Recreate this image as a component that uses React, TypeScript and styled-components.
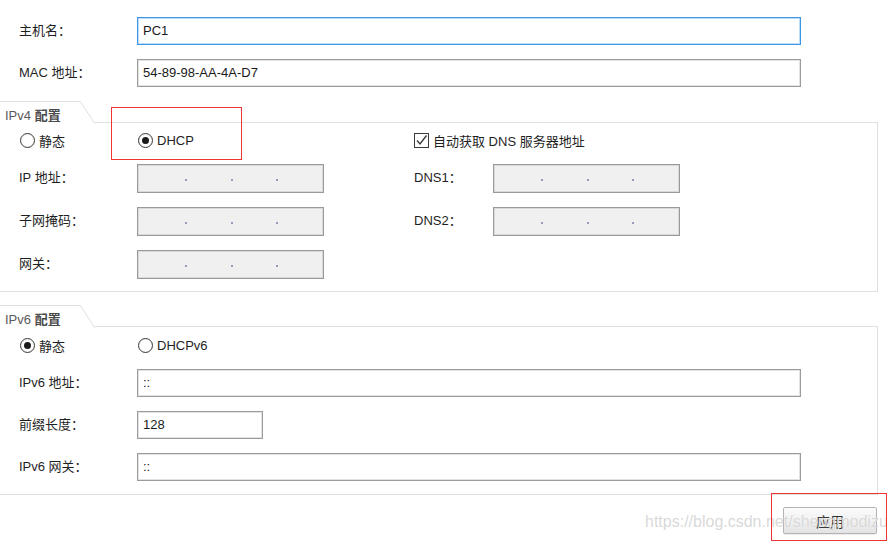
import React from 'react';
import styled, { createGlobalStyle } from 'styled-components';

const GlobalStyle = createGlobalStyle`
    html, body {
        margin: 0;
        padding: 0;
        background: #ffffff;
    }
    body {
        font-family: "Liberation Sans", "Noto Sans CJK SC", sans-serif;
        font-size: 13px;
        color: #1f1f1f;
    }
`;

const Page = styled.div`
    position: relative;
    width: 894px;
    height: 546px;
    overflow: hidden;
    padding-top: 17px;
    box-sizing: border-box;
    background: #ffffff;
`;

const TopForm = styled.div`
    display: grid;
    grid-template-columns: 118px 664px;
    row-gap: 14px;
    padding-left: 19px;
    align-items: center;
`;

const Label = styled.span`
    font-size: 13px;
    color: #1f1f1f;
    white-space: nowrap;
    padding-bottom: 4px;
`;

const TextField = styled.div<{ $focused?: boolean; $width?: number }>`
    height: 28px;
    width: ${p => (p.$width ? `${p.$width}px` : 'auto')};
    box-sizing: border-box;
    border: 1px solid ${p => (p.$focused ? '#3d96e6' : '#9c9c9c')};
    box-shadow: inset 0 0 0 1px ${p => (p.$focused ? '#bcdcf7' : '#e2e2e2')};
    background: #ffffff;
    display: flex;
    align-items: center;
    padding: 0 0 1px 5px;
    font-size: 13px;
    color: #1a1a1a;
`;

const Group = styled.div<{ $top: number }>`
    width: 878px;
    margin-top: ${p => p.$top}px;
`;

const GroupHeader = styled.div`
    display: flex;
    height: 22px;
`;

const Tab = styled.div`
    position: relative;
    width: 80px;
    height: 22px;
    box-sizing: border-box;
    border-top: 1px solid #e0e0e0;
    padding: 3px 0 0 5px;
    font-size: 13px;
    color: #5a5a5a;
    white-space: nowrap;

    b {
        color: #4a4a4a;
    }

    &::after {
        content: '';
        position: absolute;
        left: 80px;
        top: -1px;
        width: 15px;
        height: 23px;
        background: linear-gradient(
            to top right,
            transparent calc(50% - 0.8px),
            #dedede 50%,
            transparent calc(50% + 0.8px)
        );
    }
`;

const TabGap = styled.div`
    width: 15px;
`;

const HeaderLine = styled.div`
    flex: 1;
    border-bottom: 1px solid #e0e0e0;
`;

const GroupBody = styled.div<{ $pt: number; $pb: number }>`
    border-right: 1px solid #e0e0e0;
    border-bottom: 1px solid #e0e0e0;
    padding: ${p => p.$pt}px 0 ${p => p.$pb}px 19px;
`;

const Ipv4Grid = styled.div`
    display: grid;
    grid-template-columns: 118px 187px 90px 79px 187px;
    grid-template-rows: 20px 29px 29px 29px;
    row-gap: 14px;
    align-items: center;
`;

const Ipv6Grid = styled.div`
    display: grid;
    grid-template-columns: 118px 664px;
    grid-template-rows: 20px 28px 28px 28px;
    row-gap: 14px;
    align-items: center;
`;

const Choice = styled.label<{ $span?: number }>`
    display: flex;
    align-items: center;
    gap: 4px;
    font-size: 13px;
    color: #1f1f1f;
    white-space: nowrap;
    grid-column: ${p => (p.$span ? `span ${p.$span}` : 'auto')};
`;

const RadioMark = styled.span<{ $checked?: boolean }>`
    position: relative;
    width: 15px;
    height: 15px;
    box-sizing: border-box;
    border-radius: 50%;
    border: 1px solid #3a3a3a;
    background: #ffffff;
    box-shadow: inset 0 0 0 1px #f2f2f2;
    margin-left: 1px;

    &::after {
        content: '';
        display: ${p => (p.$checked ? 'block' : 'none')};
        position: absolute;
        left: 3px;
        top: 3px;
        width: 7px;
        height: 7px;
        border-radius: 50%;
        background: #1a1a1a;
    }
`;

const CheckMark = styled.span`
    width: 15px;
    height: 15px;
    box-sizing: border-box;
    border: 1px solid #3a3a3a;
    background: #ffffff;
    display: flex;
    align-items: center;
    justify-content: center;
`;

const Spacer = styled.span``;

const IpField = styled.div`
    height: 29px;
    width: 187px;
    box-sizing: border-box;
    border: 1px solid #9a9a9a;
    box-shadow: inset 0 0 0 1px #d9d9d9;
    background: #f0f0f0;
    display: flex;
    align-items: center;
    padding: 0 2px 0 4px;
`;

const IpSegment = styled.span`
    flex: 1;
`;

const IpDot = styled.span`
    width: 2px;
    height: 2px;
    margin-top: 3px;
    border-radius: 1px;
    background: #7a7fa8;
`;

const Footer = styled.div`
    width: 877px;
    display: flex;
    justify-content: flex-end;
    margin-top: 12px;
`;

const ApplyButton = styled.button`
    width: 94px;
    height: 27px;
    border: 1px solid #b4b4b4;
    border-radius: 2px;
    background: linear-gradient(to bottom, #fbfbfb 0%, #f1f1f1 50%, #e3e3e3 100%);
    box-shadow: 0 1px 1px rgba(0, 0, 0, 0.08);
    font-family: "Noto Sans CJK SC", sans-serif;
    font-size: 14px;
    color: #333333;
    padding: 0;
`;

const Annotation = styled.div<{ $x: number; $y: number; $w: number; $h: number }>`
    position: absolute;
    z-index: 10;
    left: ${p => p.$x}px;
    top: ${p => p.$y}px;
    width: ${p => p.$w}px;
    height: ${p => p.$h}px;
    box-sizing: border-box;
    border: 1px solid #f03434;
    pointer-events: none;
`;

const Watermark = styled.div`
    position: absolute;
    z-index: 5;
    left: 645px;
    top: 513px;
    font-family: "Liberation Sans", sans-serif;
    font-size: 16px;
    color: rgba(200, 200, 200, 0.7);
    text-shadow: 0 0 1px rgba(255, 255, 255, 0.9);
    white-space: nowrap;
    pointer-events: none;
`;

function Radio({ checked, children }: { checked?: boolean; children: React.ReactNode }) {
    return (
        <Choice>
            <RadioMark $checked={checked} />
            {children}
        </Choice>
    );
}

function Ip() {
    return (
        <IpField>
            <IpSegment />
            <IpDot />
            <IpSegment />
            <IpDot />
            <IpSegment />
            <IpDot />
            <IpSegment />
        </IpField>
    );
}

function GroupTitle({ version }: { version: string }) {
    return (
        <GroupHeader>
            <Tab>
                {version} <b>配置</b>
            </Tab>
            <TabGap />
            <HeaderLine />
        </GroupHeader>
    );
}

function App() {
    return (
        <Page>
            <GlobalStyle />
            <TopForm>
                <Label>主机名：</Label>
                <TextField $focused>PC1</TextField>
                <Label>MAC 地址：</Label>
                <TextField>54-89-98-AA-4A-D7</TextField>
            </TopForm>

            <Group $top={14}>
                <GroupTitle version="IPv4" />
                <GroupBody $pt={7} $pb={12}>
                    <Ipv4Grid>
                        <Radio>静态</Radio>
                        <Radio checked>DHCP</Radio>
                        <Spacer />
                        <Choice $span={2}>
                            <CheckMark>
                                <svg width="13" height="13" viewBox="0 0 13 13">
                                    <path d="M2 6.5 L5 10 L11.5 1.5" fill="none" stroke="#3a3a3a" strokeWidth="1.4" />
                                </svg>
                            </CheckMark>
                            自动获取 DNS 服务器地址
                        </Choice>

                        <Label>IP 地址：</Label>
                        <Ip />
                        <Spacer />
                        <Label>DNS1：</Label>
                        <Ip />

                        <Label>子网掩码：</Label>
                        <Ip />
                        <Spacer />
                        <Label>DNS2：</Label>
                        <Ip />

                        <Label>网关：</Label>
                        <Ip />
                    </Ipv4Grid>
                </GroupBody>
            </Group>

            <Group $top={13}>
                <GroupTitle version="IPv6" />
                <GroupBody $pt={8} $pb={13}>
                    <Ipv6Grid>
                        <Radio checked>静态</Radio>
                        <Radio>DHCPv6</Radio>

                        <Label>IPv6 地址：</Label>
                        <TextField>::</TextField>

                        <Label>前缀长度：</Label>
                        <TextField $width={126}>128</TextField>

                        <Label>IPv6 网关：</Label>
                        <TextField>::</TextField>
                    </Ipv6Grid>
                </GroupBody>
            </Group>

            <Footer>
                <ApplyButton>应用</ApplyButton>
            </Footer>

            <Annotation $x={111} $y={107} $w={131} $h={53} />
            <Annotation $x={771} $y={493} $w={116} $h={48} />
            <Watermark>https://blog.csdn.net/shengmodizu</Watermark>
        </Page>
    );
}

export default App;
